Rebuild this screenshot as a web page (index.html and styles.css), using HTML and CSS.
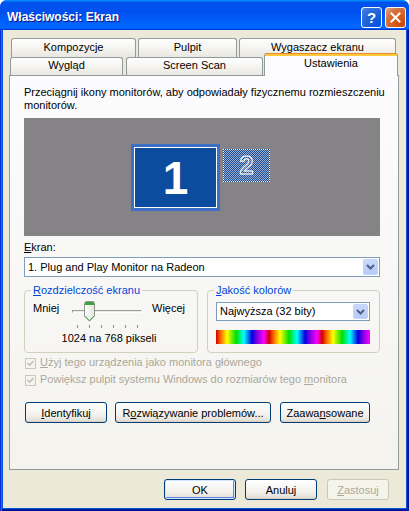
FILE: index.html
```html
<!DOCTYPE html>
<html lang="pl">
<head>
<meta charset="utf-8">
<title>Właściwości: Ekran</title>
<link rel="stylesheet" href="styles.css">
</head>
<body>
<div class="window">
  <div class="titlebar">
    <span class="title">Właściwości: Ekran</span>
    <div class="caption-buttons">
      <span class="cap-btn help">?</span>
      <span class="cap-btn close"><svg width="13" height="13" viewBox="0 0 13 13"><path d="M2.5 2.5 L10.5 10.5 M10.5 2.5 L2.5 10.5" stroke="#fff" stroke-width="2" stroke-linecap="square"/></svg></span>
    </div>
  </div>
  <div class="frame">
    <div class="client">
      <div class="tabs">
        <div class="tabrow back">
          <div class="tab t-komp">Kompozycje</div>
          <div class="tab t-pulpit">Pulpit</div>
          <div class="tab t-wyg">Wygaszacz ekranu</div>
        </div>
        <div class="tabrow front">
          <div class="tab t-wyglad">Wygląd</div>
          <div class="tab t-scan">Screen Scan</div>
          <div class="tab t-ust selected">Ustawienia</div>
        </div>
      </div>
      <div class="panel">
        <p class="hint">Przeciągnij ikony monitorów, aby odpowiadały fizycznemu rozmieszczeniu<br>monitorów.</p>
        <div class="monitors">
          <div class="mon mon1"><div class="mon1-inner">1</div></div>
          <div class="mon mon2">2</div>
        </div>
        <div class="label"><u>E</u>kran:</div>
        <div class="combo wide">
          <span class="combo-text">1. Plug and Play Monitor na Radeon</span>
          <span class="combo-btn"><svg width="9" height="6" viewBox="0 0 9 6"><path d="M1 1 L4.5 4.5 L8 1" fill="none" stroke="#4D6185" stroke-width="2"/></svg></span>
        </div>
        <div class="groups">
          <fieldset class="group res">
            <legend><u>R</u>ozdzielczość ekranu</legend>
            <div class="slider-row">
              <span class="s-lbl mniej">Mniej</span>
              <div class="slider">
                <div class="track"></div>
                <svg class="thumb" width="11" height="21" viewBox="0 0 11 21">
                  <defs>
                    <linearGradient id="tb" x1="0" y1="0" x2="1" y2="0">
                      <stop offset="0" stop-color="#FFFFFF"/>
                      <stop offset="1" stop-color="#E3E2DA"/>
                    </linearGradient>
                  </defs>
                  <path d="M0.5 2.5 Q0.5 0.5 2.5 0.5 H8.5 Q10.5 0.5 10.5 2.5 V15 L5.5 20.2 L0.5 15 Z" fill="url(#tb)" stroke="#8A9488"/>
                  <path d="M1 2.5 Q1 1 2.5 1 H8.5 Q10 1 10 2.5 V4 H1 Z" fill="#3AA33A"/>
                  <path d="M1 15 L5.5 19.6 L10 15" fill="none" stroke="#4FA84F" stroke-width="1"/>
                </svg>
              </div>
              <span class="s-lbl wiecej">Więcej</span>
            </div>
            <div class="ticks"><i></i><i></i><i></i><i></i><i></i><i></i></div>
            <div class="res-text">1024 na 768 pikseli</div>
          </fieldset>
          <fieldset class="group colors">
            <legend><u>J</u>akość kolorów</legend>
            <div class="combo small">
              <span class="combo-text">Najwyższa (32 bity)</span>
              <span class="combo-btn"><svg width="9" height="6" viewBox="0 0 9 6"><path d="M1 1 L4.5 4.5 L8 1" fill="none" stroke="#4D6185" stroke-width="2"/></svg></span>
            </div>
            <div class="colorbar"></div>
          </fieldset>
        </div>
        <div class="check first">
          <span class="box"><svg width="9" height="9" viewBox="0 0 9 9"><path d="M1.5 4 L3.5 6 L7.5 2" fill="none" stroke="#C2C0B4" stroke-width="1.6"/></svg></span>
          <span class="ctext"><u>U</u>żyj tego urządzenia jako monitora głównego</span>
        </div>
        <div class="check second">
          <span class="box"><svg width="9" height="9" viewBox="0 0 9 9"><path d="M1.5 4 L3.5 6 L7.5 2" fill="none" stroke="#C2C0B4" stroke-width="1.6"/></svg></span>
          <span class="ctext">Powiększ pulpit systemu Windows do rozmiarów tego <u>m</u>onitora</span>
        </div>
        <div class="actions">
          <span class="btn b-ident"><u>I</u>dentyfikuj</span>
          <span class="btn b-rozw">R<u>o</u>związywanie problemów...</span>
          <span class="btn b-zaaw">Zaawa<u>n</u>sowane</span>
        </div>
      </div>
      <div class="footer">
        <span class="btn b-ok default">OK</span>
        <span class="btn b-anuluj">Anuluj</span>
        <span class="btn b-zast disabled"><u>Z</u>astosuj</span>
      </div>
    </div>
  </div>
</div>
</body>
</html>
```
FILE: styles.css
```css
* { box-sizing: border-box; }
html, body { margin: 0; padding: 0; }
body {
  background: #ffffff;
  font-family: "Liberation Sans", Arial, sans-serif;
  font-size: 11px;
  color: #000;
}
.window {
  width: 409px;
  height: 511px;
  display: flex;
  flex-direction: column;
  border-radius: 7px 7px 0 0;
  overflow: hidden;
  background: #0855dd;
}
.titlebar {
  height: 30px;
  flex: none;
  display: flex;
  align-items: flex-start;
  padding: 0 3px 0 7px;
  background: linear-gradient(180deg, #0997ff, #0053ee 8%, #0050ee 40%, #0066ff 88%, #0066ff 93%, #005bff 95%, #003dd7 96%, #003dd7);
}
.title {
  flex: 1;
  margin-top: 10px;
  line-height: 14px;
  font-size: 12px;
  font-weight: bold;
  color: #fff;
  text-shadow: 1px 1px #0f1089;
  white-space: nowrap;
}
.caption-buttons { display: flex; gap: 3px; margin-top: 7px; }
.cap-btn {
  width: 21px; height: 21px;
  border: 1px solid #fff;
  border-radius: 3px;
  display: flex; align-items: center; justify-content: center;
}
.help {
  background: radial-gradient(circle at 85% 90%, #0054e9 0%, #2263d5 55%, #4479e4 90%, #a3bbec 100%);
  color: #fff;
  font-weight: bold;
  font-size: 15px;
  line-height: 19px;
}
.close {
  background: radial-gradient(circle at 90% 90%, #cc4600 0%, #dc6527 55%, #cd7546 70%, #e9a887 100%);
}
.frame {
  flex: 1;
  display: flex;
  padding: 0 3px 3px;
  box-shadow: inset 1px 0 #0831d9, inset 2px 0 #166aee, inset -1px 0 #00138c, inset -2px 0 #001ea0,
              inset 0 -1px #00138c, inset 0 -2px #001ea0;
}
.client {
  flex: 1;
  background: #ece9d8;
  padding: 0 0 0 6px;
  display: flex;
  flex-direction: column;
}
/* tabs */
.tabs { padding-top: 8px; }
.tabrow { display: flex; align-items: flex-end; }
.tabrow.back { height: 19px; padding-left: 2px; gap: 2px; }
.tabrow.front { height: 18px; padding-left: 1px; }
.tab {
  flex: none;
  text-align: center;
  white-space: nowrap;
  border: 1px solid #919b9c;
  border-bottom: 0;
  border-radius: 3px 3px 0 0;
  background: linear-gradient(#ffffff, #f4f3ef 55%, #e8e7e0);
}
.back .tab { height: 19px; line-height: 17px; }
.front .tab { height: 18px; line-height: 15px; }
.t-komp { width: 125px; }
.t-pulpit { width: 99px; }
.t-wyg { width: 157px; }
.t-wyglad { width: 113px; }
.t-scan { width: 137px; margin-left: 3px; }
.t-ust { width: 134px; margin-left: 1px; }
.front .tab.selected {
  position: relative;
  z-index: 2;
  height: 23px;
  margin-bottom: -1px;
  border-top: 0;
  padding-top: 3px;
  background: linear-gradient(#e68b2c 0 1px, #ffc73c 1px 3px, #fcfcfe 3px);
}
/* panel */
.panel {
  width: 390px;
  height: 395px;
  flex: none;
  border: 1px solid #919b9c;
  background: linear-gradient(#fcfcfe, #f4f3ee);
  padding: 10px 0 0 14px;
}
.hint { margin: 0; line-height: 13px; white-space: nowrap; }
.monitors {
  position: relative;
  width: 356px;
  height: 118px;
  margin-top: 6px;
  background: #858385;
}
.mon1 {
  position: absolute;
  left: 107px; top: 26px;
  width: 89px; height: 67px;
  padding: 3px;
  background: #3c6fc7;
}
.mon1-inner {
  height: 100%;
  border: 1px solid #ffffff;
  background: #0b4c9f;
  color: #fff;
  font-size: 46px;
  font-weight: bold;
  line-height: 1;
  display: flex; align-items: center; justify-content: center;
}
.mon2 {
  position: absolute;
  left: 199px; top: 31px;
  width: 47px; height: 33px;
  border: 1px dotted #ffffff;
  background: repeating-conic-gradient(#1d4e98 0 25%, #9aabcb 0 50%) 0 0 / 2px 2px;
  color: transparent;
  -webkit-text-stroke: 1px #ffffff;
  font-size: 25px;
  font-weight: bold;
  line-height: 1;
  display: flex; align-items: center; justify-content: center;
}
.label { margin-top: 5px; line-height: 13px; }
.combo {
  display: flex;
  align-items: center;
  border: 1px solid #7f9db9;
  background: #fff;
  padding: 0 1px 0 3px;
}
.combo.wide { width: 356px; height: 20px; margin-top: 3px; }
.combo.small { width: 154px; height: 19px; margin-top: 5px; }
.combo-text { flex: 1; line-height: 17px; white-space: nowrap; }
.combo-btn {
  width: 15px;
  height: calc(100% - 2px);
  border: 1px solid #c3d3fd;
  border-radius: 2px;
  background: linear-gradient(#c9d9fd, #b6caf6);
  display: flex; align-items: center; justify-content: center;
}
/* groups */
.groups { display: flex; gap: 9px; margin-top: 7px; }
.group {
  margin: 0;
  padding: 0 0 0 8px;
  border: 1px solid #d0d0bf;
  border-radius: 4px;
  height: 69px;
  min-inline-size: 0;
}
.group.res { width: 174px; }
.group.colors { width: 173px; }
.group legend {
  padding: 0 2px;
  margin-left: -2px;
  line-height: 13px;
  color: #0046d5;
}
.slider-row { display: flex; height: 22px; margin-top: 3px; }
.s-lbl { line-height: 13px; margin-top: 2px; }
.mniej { width: 39px; }
.wiecej { margin-left: 10px; }
.slider { position: relative; width: 70px; height: 22px; }
.track {
  margin-top: 10px;
  height: 3px;
  border: 1px solid;
  border-color: #9d9c99 #ffffff #ffffff #9d9c99;
  background: #ecebe6;
}
.thumb { position: absolute; left: 12px; top: 1px; }
.ticks { display: flex; gap: 11px; padding-left: 44px; margin-top: 3px; height: 3px; }
.ticks i { display: block; width: 1px; height: 3px; background: #8e8e8a; }
.res-text { margin-top: 4px; line-height: 13px; text-align: center; padding-right: 12px; }
.colorbar {
  width: 154px;
  height: 14px;
  margin-top: 9px;
  background: repeating-linear-gradient(90deg, #d00000 0px, #ff7000 5px, #ffff00 11px, #00e000 20px, #00ffff 28px, #0000e0 36px, #8000e0 41px, #ff00ff 48px, #d00000 53px);
}
/* checks */
.check { display: flex; align-items: flex-start; line-height: 13px; color: #aca899; }
.check.first { margin-top: 3px; }
.check.second { margin-top: 4px; }
.box {
  width: 11px; height: 11px;
  margin: 2px 4px 0 1px;
  border: 1px solid #cac8bb;
  background: #f5f4ee;
  display: flex; align-items: center; justify-content: center;
}
/* buttons */
.btn {
  display: flex; align-items: center; justify-content: center;
  height: 21px;
  border: 1px solid #003c74;
  border-radius: 3px;
  background: linear-gradient(#ffffff, #f3f2ee 60%, #e6e3da 88%, #d6d0c5);
  white-space: nowrap;
}
.actions { display: flex; margin-top: 16px; padding-left: 1px; }
.b-ident { width: 82px; }
.b-rozw { width: 156px; margin-left: 8px; }
.b-zaaw { width: 90px; margin-left: 9px; }
.footer { display: flex; justify-content: flex-end; margin-top: 9px; padding-right: 17px; }
.b-ok { width: 72px; }
.b-anuluj { width: 72px; margin-left: 9px; }
.b-zast { width: 62px; margin-left: 10px; }
.btn.default { box-shadow: inset 0 0 0 1px #cee7ff, inset -1px -1px 0 1px #6982ee; }
.btn.disabled { border-color: #c9c7ba; color: #aca899; background: #f5f4ea; }
```
